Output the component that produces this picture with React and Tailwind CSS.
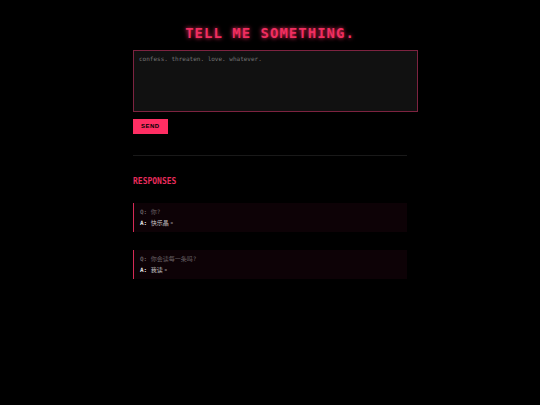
import React, { useState } from 'react';

const responses = [
  { id: 1, question: '你?', answer: '快乐晶。' },
  { id: 2, question: '你会读每一条吗?', answer: '我读。' },
];

const ResponseCard = ({ question, answer }) => (
  <article className="border-l border-[#d62a55] bg-[#0d0206] px-1.5 pt-[3px] pb-1 text-[6px] leading-[11px]">
    <p className="text-[#665f62]">
      <span className="font-bold">Q:</span> {question}
    </p>
    <p className="text-[#c4c0c2]">
      <span className="font-bold text-[#e6e6e6]">A:</span> {answer}
    </p>
  </article>
);

const App = () => {
  const [message, setMessage] = useState('');

  const handleSubmit = (event) => {
    event.preventDefault();
    setMessage('');
  };

  return (
    <div className="min-h-screen bg-black px-4 pt-[23px] font-['DejaVu_Sans_Mono','Noto_Sans_CJK_TC',monospace] text-white">
      <main className="mx-auto w-full max-w-[274px]">
        <h1 className="text-center text-[14px] leading-[20px] font-bold tracking-[1px] whitespace-nowrap text-[#f02e60] [text-shadow:0_0_4px_#ff2e63]">
          TELL ME SOMETHING.
        </h1>

        <form onSubmit={handleSubmit} className="mt-[7px]">
          {/* The box runs past the column by its own padding and border */}
          <textarea
            aria-label="Message"
            value={message}
            onChange={(event) => setMessage(event.target.value)}
            placeholder="confess. threaten. love. whatever."
            className="box-content block h-[52px] w-full resize-none border border-[#7d2340] bg-[#111111] py-1 pr-1 pl-[5px] text-[6px] leading-[7px] text-white outline-none placeholder:text-[#757575]"
          />
          <button
            type="submit"
            className="mt-[7px] block bg-[#ff2e63] px-2 py-1 font-['Liberation_Sans',sans-serif] text-[6px] leading-[7px] font-bold tracking-[0.5px] text-black"
          >
            SEND
          </button>
        </form>

        <hr className="mt-[21px] border-[#191919]" />

        <section className="mt-5">
          <h2 className="text-[8px] leading-[12px] font-bold text-[#e82c5c]">RESPONSES</h2>
          <div className="mt-[15px] flex flex-col gap-[18px]">
            {responses.map((item) => (
              <ResponseCard key={item.id} question={item.question} answer={item.answer} />
            ))}
          </div>
        </section>
      </main>
    </div>
  );
};

export default App;
